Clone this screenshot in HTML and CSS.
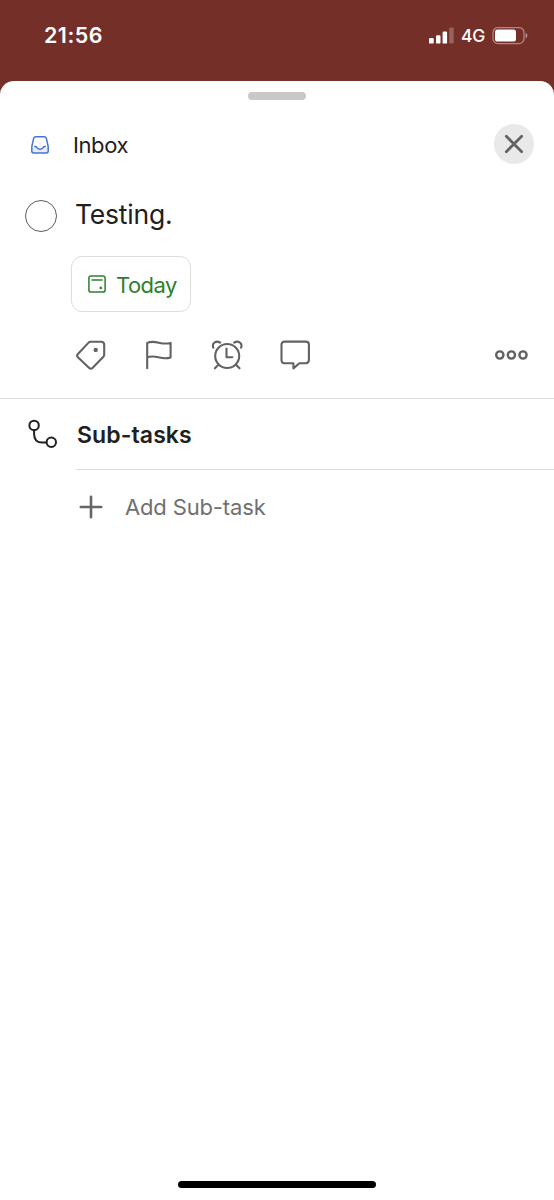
FILE: index.html
```html
<!DOCTYPE html>
<html lang="en">
<head>
<meta charset="utf-8">
<title>Task</title>
<link rel="stylesheet" href="styles.css">
</head>
<body>
<div class="screen">
  <header class="status">
    <span class="time">21:56</span>
    <div class="indicators">
      <svg class="signal" width="26" height="18" viewBox="0 0 26 18" fill="#fff"><rect x="1" y="11" width="4.7" height="5.6" rx="1.2"/><rect x="8" y="8.3" width="4.5" height="8.3" rx="1.2"/><rect x="14.6" y="4.6" width="4.5" height="12" rx="1.2"/><rect x="21.2" y=".6" width="4.5" height="16" rx="1.2" opacity=".25"/></svg>
      <span class="network">4G</span>
      <svg class="battery" width="37" height="18" viewBox="0 0 37 18"><rect x="1" y=".6" width="31" height="16" rx="5" fill="none" stroke="#fff" stroke-opacity=".42" stroke-width="1.3"/><rect x="3" y="2.6" width="21" height="12" rx="2.6" fill="#fff"/><path d="M33.6 6c2.3.8 2.3 4.4 0 5.2z" fill="#fff" opacity=".5"/></svg>
    </div>
  </header>
  <main class="sheet">
    <div class="handle"></div>
    <div class="project">
      <svg class="inbox-icon" width="20" height="20" viewBox="0 0 20 20" fill="none" stroke="#4674d0" stroke-width="1.5" stroke-linejoin="round"><path d="M1.8 12.2h3.4c.9 0 1.2.4 1.7 1.1 1.5 2 4.7 2 6.2 0 .5-.7.8-1.1 1.7-1.1h3.4v4.2c0 1-.8 1.8-1.8 1.8H3.6c-1 0-1.8-.8-1.8-1.8z" fill="#e4eefd" stroke="none"/><path d="M5.7 1.7h8.6c1 0 1.7.6 2 1.5l1.9 8.5v4.4c0 1.2-.8 2-2 2H3.8c-1.2 0-2-.8-2-2v-4.4l1.9-8.5c.3-.9 1-1.5 2-1.5z"/><path d="M4.2 11.6h1.2c.8 0 1.2.5 1.7 1.1 1.5 2 4.3 2 5.8 0 .5-.6.9-1.1 1.7-1.1h1.2"/></svg>
      <span class="project-name">Inbox</span>
      <button class="close" aria-label="Close"><svg width="20" height="20" viewBox="0 0 20 20" fill="none" stroke="#626262" stroke-width="2.7" stroke-linecap="round"><path d="M2.3 2.3l15.4 15.4M17.7 2.3L2.3 17.7"/></svg></button>
    </div>
    <div class="task">
      <span class="check"></span>
      <h1 class="task-title">Testing.</h1>
    </div>
    <button class="due">
      <svg width="18" height="18" viewBox="0 0 18 18" fill="none" stroke="#2e7f2c" stroke-width="1.5" stroke-linecap="round"><rect x=".9" y=".9" width="16.2" height="16.2" rx="2.2"/><path d="M4 5h10"/><circle cx="12.8" cy="12.9" r="1.3" fill="#2e7f2c" stroke="none"/></svg>
      <span class="due-label">Today</span>
    </button>
    <div class="tools">
      <svg width="32" height="32" viewBox="0 0 32 32"><path d="M15.8 2.7h10.3c1.9 0 3.1 1.2 3.1 3.1v9.8c0 .8-.3 1.5-.8 2.1L17.5 29c-1 1-2.3 1-3.3 0L2.9 18.2c-1-1-1-2.2 0-3.2L13.6 3.6c.6-.6 1.3-.9 2.2-.9z"/><circle cx="20.7" cy="10.9" r="2.2" fill="#626262" stroke="none"/></svg>
      <svg width="32" height="32" viewBox="0 0 32 32"><path d="M4.2 29.2V3.9c8.4-3.6 14 2.8 23.4 0v14.5c-9.4 3.2-15-3.4-23.4 0"/></svg>
      <svg width="32" height="32" viewBox="0 0 32 32"><circle cx="16.2" cy="17" r="12"/><path d="M15.5 9.6v8.7h5.9M7.4 25.8l-3.5 3.5M25 25.8l3.5 3.5M2.3 8.7C.5 4.1 5.6 1 9.2 3.7M30.1 8.7c1.8-4.6-3.3-7.7-6.9-5"/></svg>
      <svg width="32" height="32" viewBox="0 0 32 32"><path d="M5.6 2.6h21.2c2 0 3.1 1.2 3.1 3.1v15.4c0 2-1.1 3.1-3.1 3.1h-6.4l-6 5.2v-5.2H5.6c-2 0-3.1-1.1-3.1-3.1V5.7c0-1.9 1.1-3.1 3.1-3.1z"/></svg>
      <svg class="more" width="36" height="12" viewBox="0 0 36 12"><circle cx="5.8" cy="6" r="3.6"/><circle cx="17.4" cy="6" r="3.6"/><circle cx="29" cy="6" r="3.6"/></svg>
    </div>
    <section class="subtasks">
      <div class="subtasks-head">
        <svg width="30" height="30" viewBox="0 0 30 30" fill="none" stroke="#202020" stroke-width="2"><circle cx="6.1" cy="6.4" r="4.7"/><circle cx="23.3" cy="23.3" r="4.7"/><path d="M6.1 11.1v3.8c0 5.7 3 8.7 8.3 8.7h4.2"/></svg>
        <h2 class="subtasks-title">Sub-tasks</h2>
      </div>
      <div class="add">
        <svg width="24" height="24" viewBox="0 0 24 24" stroke="#666" stroke-width="2.6" stroke-linecap="round"><path d="M12 1.8v20.4M1.8 12h20.4"/></svg>
        <span class="add-label">Add Sub-task</span>
      </div>
    </section>
    <div class="home"></div>
  </main>
</div>
</body>
</html>
```
FILE: styles.css
```css
* { box-sizing: border-box; }
body { margin: 0; font-family: Inter, "Liberation Sans", sans-serif; color: #202020; }
button { font: inherit; padding: 0; border: 0; background: none; }
h1, h2 { margin: 0; }
svg { display: block; flex: none; }
.screen { width: 554px; height: 1200px; display: flex; flex-direction: column; background: #742f29; overflow: hidden; }
.status { height: 81px; flex: none; display: flex; justify-content: space-between; align-items: flex-start; padding: 20px 25px 0 44px; color: #fff; }
.time { font-size: 21.5px; line-height: 30px; font-weight: 600; letter-spacing: .45px; }
.indicators { display: flex; align-items: center; height: 31px; }
.network { font-size: 17.5px; font-weight: 500; width: 24px; margin: 0 7px 0 7px; letter-spacing: -.3px; white-space: nowrap; }
.sheet { flex: 1; display: flex; flex-direction: column; background: #fff; border-radius: 14px 14px 0 0; padding-top: 11px; }
.handle { width: 58px; height: 8px; border-radius: 4px; background: #c9c9c9; align-self: center; }
.project { display: flex; align-items: center; height: 40px; margin: 24px 20px 0 30px; }
.inbox-icon { margin-top: 1px; }
.project-name { margin-left: 23px; padding-top: 1px; font-size: 22px; line-height: 30px; letter-spacing: -.4px; }
.close { width: 40px; height: 40px; border-radius: 50%; background: #e9e9e9; margin-left: auto; display: grid; place-items: center; }
.task { display: flex; align-items: center; height: 40px; margin: 30px 0 0 25px; }
.check { width: 32px; height: 32px; border: 1.5px solid #5c5c5c; border-radius: 50%; margin-top: 4px; }
.task-title { margin-left: 18px; font-size: 26.5px; line-height: 40px; font-weight: 400; letter-spacing: -.2px; }
.due { width: 120px; height: 56px; margin: 22px 0 0 71px; padding-left: 16px; display: flex; align-items: center; gap: 10px; border: 1.5px solid #dedede; border-radius: 11px; color: #2e7f2c; }
.due-label { padding-top: 1px; font-size: 22px; line-height: 30px; letter-spacing: -.55px; }
.tools { display: flex; align-items: center; gap: 36px; height: 87px; padding: 0 24px 0 75px; border-bottom: 1px solid #dedede; fill: none; stroke: #626262; stroke-width: 2.1; stroke-linecap: round; stroke-linejoin: round; }
.more { margin-left: auto; stroke-width: 2.4; }
.subtasks-head { display: flex; align-items: center; height: 70px; padding-left: 28px; }
.subtasks-title { margin-left: 19px; padding-top: 2px; font-size: 23px; line-height: 30px; font-weight: 600; letter-spacing: .1px; }
.add { display: flex; align-items: center; height: 75px; margin-left: 76px; padding-left: 3px; border-top: 1px solid #dedede; color: #707070; }
.add-label { margin-left: 22px; font-size: 22px; line-height: 30px; letter-spacing: -.15px; }
.home { width: 198px; height: 7px; border-radius: 4px; background: #000; margin: auto auto 12px; }
```
